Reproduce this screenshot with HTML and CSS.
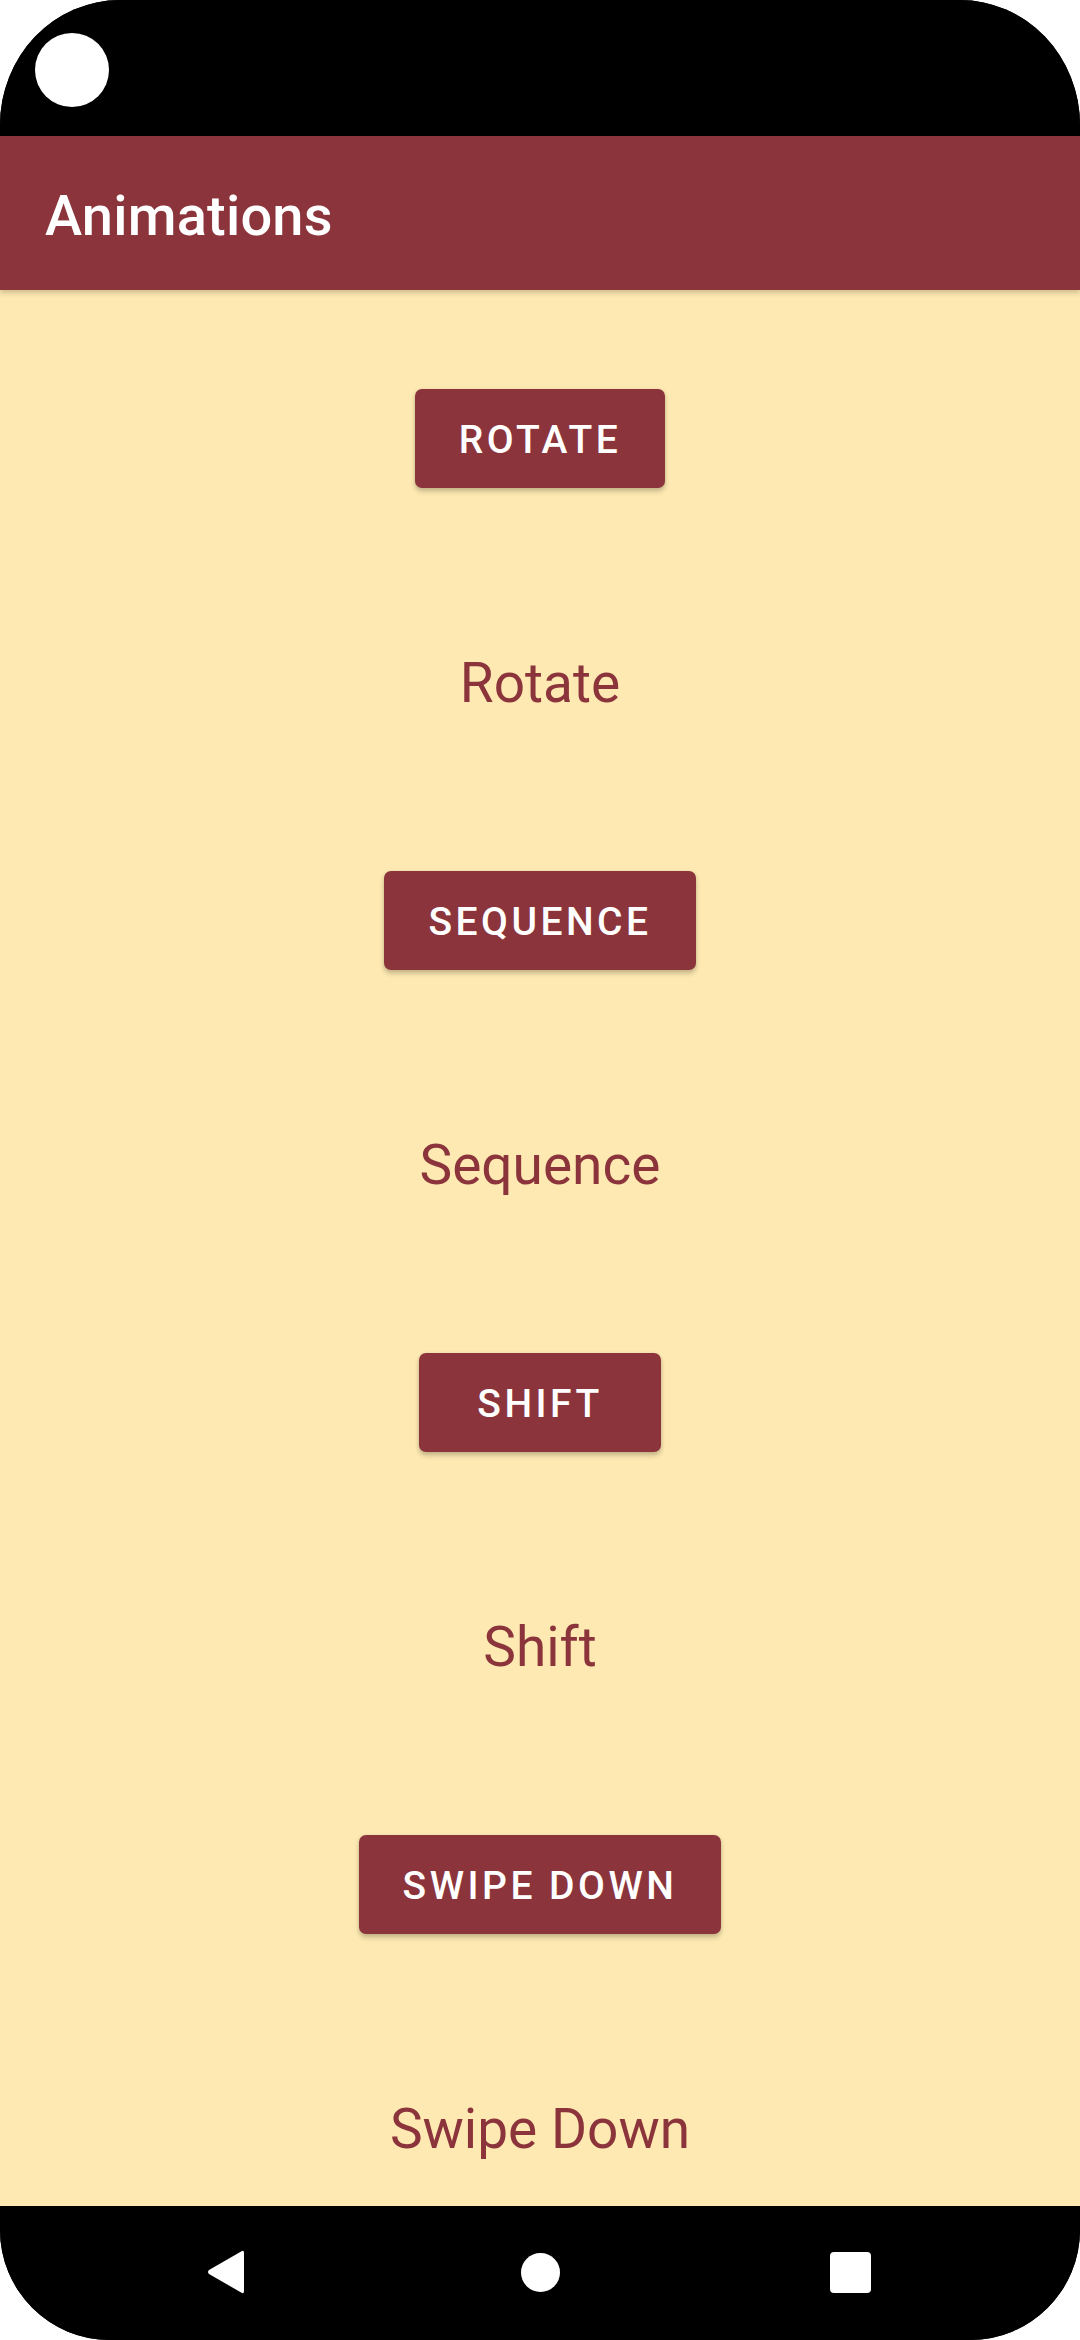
FILE: index.html
```html
<!DOCTYPE html>
<html>
<head>
<meta charset="utf-8">
<link rel="stylesheet" href="styles.css">
</head>
<body>
<div class="phone">
  <div class="status-bar">
    <div class="camera"></div>
  </div>
  <header class="app-bar">
    <h1 class="title">Animations</h1>
  </header>
  <main class="content">
    <section class="group">
      <button class="btn">ROTATE</button>
      <p class="label">Rotate</p>
    </section>
    <section class="group">
      <button class="btn">SEQUENCE</button>
      <p class="label">Sequence</p>
    </section>
    <section class="group">
      <button class="btn">SHIFT</button>
      <p class="label">Shift</p>
    </section>
    <section class="group">
      <button class="btn">SWIPE DOWN</button>
      <p class="label">Swipe Down</p>
    </section>
  </main>
  <nav class="nav-bar">
    <svg class="nav-back" width="38" height="46" viewBox="0 0 38 46">
      <path d="M35 2 Q37 1 37 4 L37 42 Q37 45 35 44 L2 25 Q0 23 2 21 Z" fill="#fff"/>
    </svg>
    <div class="nav-home"></div>
    <div class="nav-recent"></div>
  </nav>
</div>
</body>
</html>
```

FILE: styles.css
```css
* {
  box-sizing: border-box;
}

html, body {
  margin: 0;
  padding: 0;
  background: #ffffff;
}

body {
  width: 1080px;
  height: 2340px;
  overflow: hidden;
  font-family: Roboto, "Noto Sans", "Liberation Sans", sans-serif;
}

.phone {
  width: 1080px;
  height: 2340px;
  display: flex;
  flex-direction: column;
  background: #000;
  border-radius: 120px 120px 110px 110px / 125px 125px 110px 110px;
  overflow: hidden;
}

.status-bar {
  height: 136px;
  flex: none;
  background: #000;
  padding: 33px 0 0 35px;
}

.camera {
  width: 74px;
  height: 74px;
  border-radius: 50%;
  background: #fff;
}

.app-bar {
  height: 154px;
  flex: none;
  background: #8c343c;
  padding: 48px 0 0 45px;
  position: relative;
  z-index: 2;
  box-shadow: 0 3px 5px rgba(0, 0, 0, 0.18);
}

.title {
  margin: 0;
  font-size: 56px;
  line-height: 64px;
  font-weight: 500;
  color: #fff;
  letter-spacing: 0.2px;
}

.content {
  flex: 1 1 auto;
  min-height: 0;
  overflow: hidden;
  background: #fde9b1;
  display: flex;
  flex-direction: column;
  align-items: center;
  padding-top: 99px;
}

.group {
  flex: none;
  display: flex;
  flex-direction: column;
  align-items: center;
  margin-bottom: 156px;
}

.group:last-child {
  margin-bottom: 0;
}

.btn {
  height: 99px;
  min-width: 242px;
  padding: 3px 44px 0 44px;
  border: none;
  border-radius: 7px;
  background: #8c343c;
  color: #fff;
  font-family: Roboto, "Noto Sans", "Liberation Sans", sans-serif;
  font-size: 39px;
  font-weight: 500;
  letter-spacing: 3.5px;
  box-shadow: 0 4px 5px rgba(0, 0, 0, 0.16), 0 1px 4px rgba(0, 0, 0, 0.12);
}

.label {
  margin: 163px 0 0 0;
  font-size: 55px;
  line-height: 64px;
  font-weight: 400;
  color: #8c343c;
}

.nav-bar {
  height: 134px;
  flex: none;
  background: #000;
  display: flex;
  align-items: center;
  padding-bottom: 2px;
}

.nav-back {
  margin-left: 207px;
  display: block;
}

.nav-home {
  width: 39px;
  height: 39px;
  border-radius: 50%;
  background: #fff;
  margin-left: 276px;
}

.nav-recent {
  width: 41px;
  height: 41px;
  border-radius: 4px;
  background: #fff;
  margin-left: 270px;
}
```
